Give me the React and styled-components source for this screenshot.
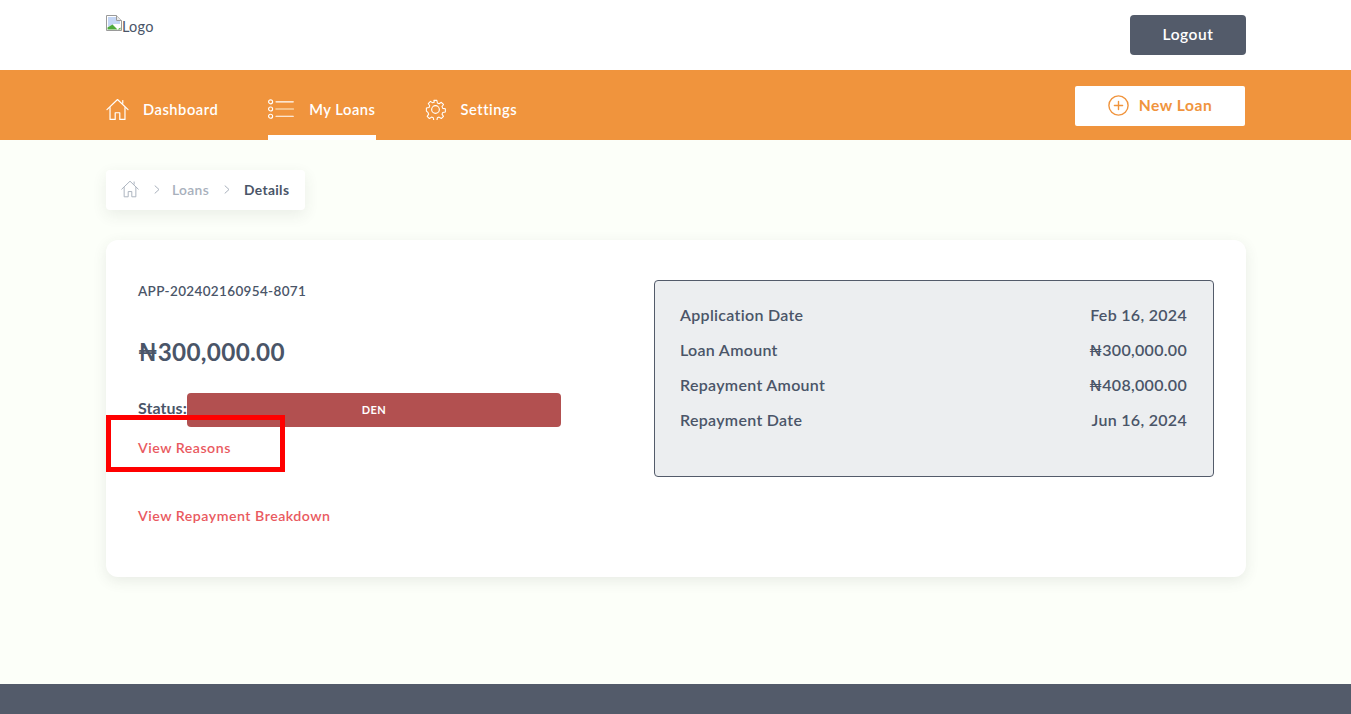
import React from "react";
import styled, { createGlobalStyle } from "styled-components";

const Global = createGlobalStyle`
  * { box-sizing: border-box; }
  html, body { margin: 0; padding: 0; }
  body { font-family: "Lato", "Noto Sans", "Liberation Sans", sans-serif; background: #fcfff9; color: #4a5568; }
`;
const Page = styled.div`
  position: relative;
  min-height: 714px;
  height: 714px;
  overflow: hidden;
  display: flex;
  flex-direction: column;
`;
const Container = styled.div`
  width: 1140px;
  margin-left: 106px;
`;
const Header = styled.header`
  height: 70px;
  background: #fff;
  flex: none;
`;
const HeaderInner = styled(Container)`
  height: 100%;
  display: flex;
  justify-content: space-between;
  align-items: flex-start;
`;
const LogoSlot = styled.div`
  display: flex;
  align-items: flex-start;
  margin-top: 15px;
  font-size: 14.5px;
  line-height: 24px;
  color: #4a5568;
  letter-spacing: 0.2px;
`;
const LogoutButton = styled.button`
  width: 116px;
  height: 40px;
  margin-top: 15px;
  padding: 0 0 2px;
  border: 0;
  border-radius: 4px;
  background: #535b6a;
  color: #fff;
  font: 600 15.5px "Lato", sans-serif;
  letter-spacing: 0.55px;
`;
const Nav = styled.nav`
  height: 70px;
  background: #f0943d;
  flex: none;
`;
const NavInner = styled(Container)`
  height: 100%;
  display: flex;
  justify-content: space-between;
`;
const NavLinks = styled.div`
  display: flex;
  gap: 49px;
`;
const NavLink = styled.a`
  display: flex;
  align-items: center;
  gap: ${(p) => p.$gap}px;
  height: 70px;
  margin-right: ${(p) => p.$after || 0}px;
  padding-top: 13px;
  color: #fff;
  font-size: 14.7px;
  font-weight: 600;
  letter-spacing: 0.52px;
  border-bottom: 5px solid ${(p) => (p.$active ? "#fff" : "transparent")};
`;
const NewLoan = styled.button`
  width: 170px;
  height: 40px;
  margin-top: 16px;
  margin-right: 1px;
  padding: 0 0 2px;
  border: 0;
  border-radius: 2px;
  background: #fff;
  color: #f0943d;
  display: flex;
  align-items: center;
  justify-content: center;
  gap: 10px;
  font: 700 15.6px "Lato", sans-serif;
  letter-spacing: 0.55px;
`;
const Main = styled.main`
  flex: 1;
  padding-top: 30px;
`;
const Crumbs = styled.div`
  width: 199px;
  height: 40px;
  padding: 0 0 2px 15px;
  display: flex;
  align-items: center;
  background: #fff;
  border-radius: 4px;
  box-shadow: 0 5px 15px rgba(60, 70, 60, 0.09);
  font-size: 13.8px;
  font-weight: 600;
  letter-spacing: 0.35px;
`;
const Crumb = styled.span`
  color: ${(p) => (p.$current ? "#4a5568" : "#a8b0bc")};
  font-weight: ${(p) => (p.$current ? 700 : 600)};
`;
const Sep = styled.span`
  display: flex;
  margin: 0 ${(p) => p.$right}px 0 ${(p) => p.$left}px;
`;
const Card = styled.section`
  margin-top: 30px;
  height: 337px;
  padding: 40px 32px 0;
  background: #fff;
  border-radius: 12px;
  box-shadow: 0 4px 14px rgba(60, 70, 60, 0.1);
  display: grid;
  grid-template-columns: 423px 560px;
  justify-content: space-between;
  align-items: start;
`;
const LeftCol = styled.div`
  display: flex;
  flex-direction: column;
`;
const AppId = styled.div`
  font-size: 13.5px;
  font-weight: 600;
  line-height: 22px;
  letter-spacing: 0.35px;
`;
const Amount = styled.div`
  margin-top: 33px;
  font-size: 24.3px;
  font-weight: 700;
  line-height: 34px;
  letter-spacing: 0.3px;
`;
const StatusRow = styled.div`
  margin-top: 24px;
  display: flex;
  height: 34px;
  font-size: 16px;
  font-weight: 700;
  line-height: 30px;
  letter-spacing: 0.05px;
`;
const StatusPill = styled.div`
  flex: 1;
  padding-bottom: 1px;
  background: #b25050;
  border-radius: 4px;
  color: #fff;
  font-size: 11px;
  font-weight: 700;
  letter-spacing: 0.4px;
  display: flex;
  align-items: center;
  justify-content: center;
`;
const TextLink = styled.a`
  margin-top: ${(p) => p.$top}px;
  color: #e95a5f;
  font-size: 14.2px;
  font-weight: 600;
  line-height: 20px;
  letter-spacing: 0.5px;
`;
const InfoBox = styled.div`
  height: 197px;
  padding: 22px 26px 0 25px;
  background: #eceef0;
  border: 1px solid #535b6a;
  border-radius: 4px;
  display: flex;
  flex-direction: column;
  gap: 11px;
`;
const InfoRow = styled.div`
  display: flex;
  justify-content: space-between;
  font-size: 16px;
  font-weight: 600;
  line-height: 24px;
  letter-spacing: 0.3px;
`;
const Footer = styled.footer`
  height: 30px;
  background: #535b6a;
  flex: none;
`;
const Annotation = styled.div`
  position: absolute;
  left: 106px;
  top: 415px;
  width: 179px;
  height: 57px;
  border: 5px solid #ff0000;
  pointer-events: none;
`;

const Stroke = styled.svg`
  display: block;
  flex: none;
  fill: none;
  stroke: ${(p) => p.$color};
  stroke-linecap: round;
  stroke-linejoin: round;
`;

const HomeIcon = ({ color, size }) => (
  <Stroke $color={color} width={size} height={size} viewBox="0 0 24 24" strokeWidth="1.25">
    <path d="M1 12.2 12 1.6l11 10.6" />
    <path d="M4.2 10v12.4h5.4v-7h4.8v7h5.4V10" />
    <path d="M17.5 2.6v3" />
  </Stroke>
);
const ListIcon = () => (
  <Stroke $color="#fff" width="26" height="20" viewBox="0 0 26 20" strokeWidth="1.15">
    <circle cx="2.6" cy="2.8" r="2" />
    <circle cx="2.6" cy="10" r="2" />
    <circle cx="2.6" cy="17.2" r="2" />
    <path d="M8 2.8h17.3M8 17.2h17.3" />
    <path d="M8 10h17.3" stroke="#f9cf9f" strokeWidth="1.6" />
  </Stroke>
);
const GearIcon = () => (
  <Stroke $color="#fff" width="21" height="21" viewBox="0 0 24 24" strokeWidth="1.3">
    <circle cx="12" cy="12" r="4.4" />
    <path d="M10.1 1h3.8l.6 3.2 2.1.9 2.7-1.8 2.7 2.7-1.8 2.7.9 2.1 3.2.6v3.8l-3.2.6-.9 2.1 1.8 2.7-2.7 2.7-2.7-1.8-2.1.9-.6 3.2h-3.8l-.6-3.2-2.1-.9-2.7 1.8-2.7-2.7 1.8-2.7-.9-2.1L1 14.1v-3.8l3.2-.6.9-2.1-1.8-2.7 2.7-2.7 2.7 1.8 2.1-.9z" transform="translate(12 12) scale(.93) translate(-12.2 -12.2)" />
  </Stroke>
);
const PlusCircle = () => (
  <Stroke $color="#f0943d" width="21" height="21" viewBox="0 0 21 21" strokeWidth="1.4">
    <circle cx="10.5" cy="10.5" r="9.6" />
    <path d="M10.5 6.4v8.2M6.4 10.5h8.2" />
  </Stroke>
);
const Chevron = () => (
  <Stroke $color="#a8b0bc" width="6" height="9" viewBox="0 0 6 9" strokeWidth="1">
    <path d="M1 .8 5 4.5 1 8.2" />
  </Stroke>
);
const BrokenImage = () => (
  <svg width="16" height="16" viewBox="0 0 16 16" style={{ display: "block", flex: "none" }}>
    <path d="M.5.5h10l5 5v10H.5z" fill="#fff" stroke="#9a9a9a" />
    <path d="M10.5.5v5h5" fill="#e8e8e8" stroke="#9a9a9a" />
    <path d="M2 2h8v4h4v3L8 9 2 12z" fill="#c4d6f5" />
    <path d="M1.5 14.5v-2l5-3 5 5z" fill="#4eaa3c" />
    <path d="M11.5 14.5l3-2v2z" fill="#4eaa3c" />
  </svg>
);

const rows = [
  ["Application Date", "Feb 16, 2024"],
  ["Loan Amount", "₦300,000.00"],
  ["Repayment Amount", "₦408,000.00"],
  ["Repayment Date", "Jun 16, 2024"],
];

export default function App() {
  return (
    <Page>
      <Global />
      <Header>
        <HeaderInner>
          <LogoSlot>
            <BrokenImage />
            Logo
          </LogoSlot>
          <LogoutButton>Logout</LogoutButton>
        </HeaderInner>
      </Header>
      <Nav>
        <NavInner>
          <NavLinks>
            <NavLink $gap={14} $after={1}>
              <HomeIcon color="#fff" size={23} />
              Dashboard
            </NavLink>
            <NavLink $gap={15} $active>
              <ListIcon />
              My Loans
            </NavLink>
            <NavLink $gap={15}>
              <GearIcon />
              Settings
            </NavLink>
          </NavLinks>
          <NewLoan>
            <PlusCircle />
            New Loan
          </NewLoan>
        </NavInner>
      </Nav>
      <Main>
        <Container>
          <Crumbs>
            <HomeIcon color="#a8b0bc" size={18} />
            <Sep $left={15} $right={12}><Chevron /></Sep>
            <Crumb>Loans</Crumb>
            <Sep $left={15} $right={14}><Chevron /></Sep>
            <Crumb $current>Details</Crumb>
          </Crumbs>
          <Card>
            <LeftCol>
              <AppId>APP-202402160954-8071</AppId>
              <Amount>₦300,000.00</Amount>
              <StatusRow>
                Status:
                <StatusPill>DEN</StatusPill>
              </StatusRow>
              <TextLink $top={11}>View Reasons</TextLink>
              <TextLink $top={48}>View Repayment Breakdown</TextLink>
            </LeftCol>
            <InfoBox>
              {rows.map(([label, value]) => (
                <InfoRow key={label}>
                  <span>{label}</span>
                  <span>{value}</span>
                </InfoRow>
              ))}
            </InfoBox>
          </Card>
        </Container>
      </Main>
      <Footer />
      <Annotation />
    </Page>
  );
}
